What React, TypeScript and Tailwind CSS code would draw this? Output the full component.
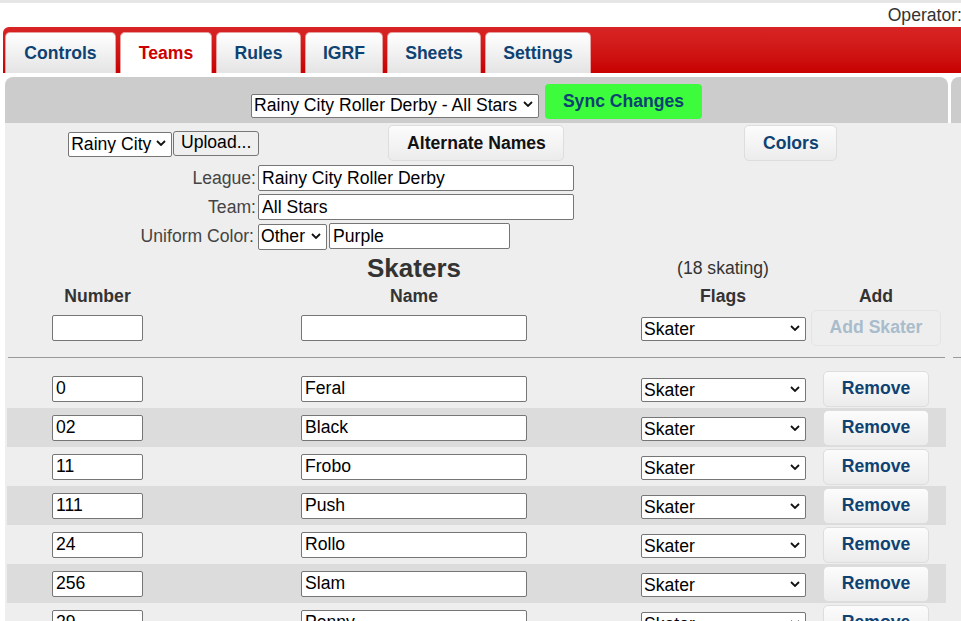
import React from "react";

const BLUE = "text-[#0e4272]";

function Chevron() {
  return (
    <svg
      className="absolute right-[6px] top-1/2 -translate-y-1/2 pointer-events-none"
      width="10"
      height="6"
      viewBox="0 0 10 6"
    >
      <path d="M1 1 L5 5 L9 1" fill="none" stroke="#111" strokeWidth="1.8" />
    </svg>
  );
}

function Select({ value, w, h }: { value: string; w: string; h: string }) {
  return (
    <div className={`relative flex-none ${w} ${h}`}>
      <select
        className={`appearance-none w-full h-full border border-[#767676] rounded-[2px] bg-white pl-[2px] pr-[18px] text-black leading-none outline-none`}
        defaultValue={value}
      >
        <option>{value}</option>
      </select>
      <Chevron />
    </div>
  );
}

function TextInput({ value, w, h = "h-[26px]" }: { value: string; w: string; h?: string }) {
  return (
    <input
      className={`flex-none ${w} ${h} border border-[#767676] rounded-[2px] bg-white px-[3px] text-black leading-none outline-none`}
      defaultValue={value}
      readOnly
    />
  );
}

const tabs = [
  { name: "Controls", w: "w-[111px]" },
  { name: "Teams", w: "w-[92px]", active: true },
  { name: "Rules", w: "w-[85px]" },
  { name: "IGRF", w: "w-[78px]" },
  { name: "Sheets", w: "w-[94px]" },
  { name: "Settings", w: "w-[106px]" },
];

const skaters = [
  ["0", "Feral"],
  ["02", "Black"],
  ["11", "Frobo"],
  ["111", "Push"],
  ["24", "Rollo"],
  ["256", "Slam"],
  ["29", "Penny"],
];

const COLS = "grid grid-cols-[181px_452px_166px_140px]";

export default function App() {
  return (
    <div className="w-[961px] h-[621px] overflow-hidden bg-white font-['Liberation_Sans',Arial,sans-serif] text-[17.6px] text-[#333]">
      <div className="h-[3px] bg-[#e6e6e6]" />
      <div className="h-[24px] flex justify-end items-center whitespace-nowrap text-[#333]">
        <span className="mr-[-1px]">Operator:</span>
      </div>
      {/* Tab bar */}
      <div className="ml-[3px] h-[46px] rounded-tl-[6px] bg-gradient-to-b from-[#d82424] to-[#c80000] flex items-end gap-[4px] pl-[2px]">
        {tabs.map((t) => (
          <div
            key={t.name}
            className={`${t.w} h-[41px] flex-none rounded-t-[5px] flex items-center justify-center font-bold border-t border-x border-[#e6a0a0] ${
              t.active
                ? "bg-white text-[#cc0000]"
                : `bg-gradient-to-b from-white to-[#e4e4e4] ${BLUE}`
            }`}
          >
            {t.name}
          </div>
        ))}
      </div>
      <div className="h-[4px]" />
      {/* Panels */}
      <div className="flex pl-[5px] h-[544px] overflow-hidden">
        <div className="w-[946px] flex-none flex flex-col">
          <div className="flex-none mr-[3px] h-[46px] bg-[#cccccc] rounded-t-[8px] flex items-start justify-center gap-[6px] pt-[7px]">
            <div className="mt-[8px]">
              <Select value="Rainy City Roller Derby - All Stars" w="w-[288px]" h="h-[24px]" />
            </div>
            <button className={`w-[157px] h-[35px] rounded-[4px] bg-[#3cfc3c] font-bold ${BLUE}`}>
              Sync Changes
            </button>
          </div>
          <div className="flex-none bg-[#eeeeee] pr-[3px]">
            {/* Top controls row */}
            <div className="grid grid-cols-3 pt-[2px] h-[38px] items-center">
              <div className="flex justify-center items-center gap-[1px] pl-[3px]">
                <Select value="Rainy City" w="w-[104px]" h="h-[25px]" />
                <button className="w-[86px] h-[25px] border border-[#767676] rounded-[3px] bg-[#efefef] text-black leading-none">
                  Upload...
                </button>
              </div>
              <div className="flex justify-center">
                <button className="w-[176px] h-[36px] rounded-[5px] border border-[#dddddd] bg-gradient-to-b from-[#fcfcfc] to-[#ececec] font-bold text-[#111]">
                  Alternate Names
                </button>
              </div>
              <div className="flex justify-center">
                <button className={`w-[93px] h-[36px] rounded-[5px] border border-[#dddddd] bg-gradient-to-b from-[#fcfcfc] to-[#ececec] font-bold ${BLUE}`}>
                  Colors
                </button>
              </div>
            </div>
            {/* Fields */}
            <div className="flex flex-col gap-[3px] mt-[4px]">
              <div className="flex items-center h-[26px]">
                <div className="w-[253px] text-right pr-[2px] text-[#444]">League:</div>
                <TextInput value="Rainy City Roller Derby" w="w-[316px]" />
              </div>
              <div className="flex items-center h-[26px]">
                <div className="w-[253px] text-right pr-[2px] text-[#444]">Team:</div>
                <TextInput value="All Stars" w="w-[316px]" />
              </div>
              <div className="flex items-center h-[26px] gap-[2px]">
                <div className="w-[251px] text-right pr-[2px] text-[#444]">Uniform Color:</div>
                <Select value="Other" w="w-[69px]" h="h-[26px]" />
                <TextInput value="Purple" w="w-[181px]" />
              </div>
            </div>
            {/* Skaters table */}
            <div className="ml-[2px] w-[939px] mt-[4px]">
              <div className={`${COLS} h-[30px] items-center`}>
                <div />
                <div className="text-center font-bold text-[26px] leading-[30px] text-[#333]">Skaters</div>
                <div className="text-center text-[#333]">(18 skating)</div>
                <div />
              </div>
              <div className={`${COLS} h-[25px] items-center font-bold text-[#333]`}>
                <div className="text-center">Number</div>
                <div className="text-center">Name</div>
                <div className="text-center">Flags</div>
                <div className="text-center">Add</div>
              </div>
              <div className={`${COLS} h-[39px] items-center`}>
                <div className="flex justify-center">
                  <TextInput value="" w="w-[91px]" />
                </div>
                <div className="flex justify-center">
                  <TextInput value="" w="w-[226px]" />
                </div>
                <div className="pl-[1px]">
                  <Select value="Skater" w="w-[165px]" h="h-[24px]" />
                </div>
                <div className="flex justify-center">
                  <button className="w-[130px] h-[36px] rounded-[5px] border border-[#e4e4e4] bg-[#eeeeee] font-bold text-[#a9bccb]">
                    Add Skater
                  </button>
                </div>
              </div>
              <div className="mt-[10px] mb-[11px] ml-[1px] w-[937px] h-[1px] bg-[#9a9a9a]" />
              {skaters.map(([num, name], i) => (
                <div
                  key={num}
                  className={`${COLS} h-[39px] items-center ${i % 2 === 1 ? "bg-[#dcdcdc]" : "bg-[#eeeeee]"}`}
                >
                  <div className="flex justify-center">
                    <TextInput value={num} w="w-[91px]" />
                  </div>
                  <div className="flex justify-center">
                    <TextInput value={name} w="w-[226px]" />
                  </div>
                  <div className="pl-[1px]">
                    <Select value="Skater" w="w-[165px]" h="h-[24px]" />
                  </div>
                  <div className="flex justify-center">
                    <button className={`w-[106px] h-[36px] rounded-[5px] border border-[#dddddd] bg-gradient-to-b from-[#fcfcfc] to-[#ececec] font-bold ${BLUE}`}>
                      Remove
                    </button>
                  </div>
                </div>
              ))}
            </div>
          </div>
        </div>
        <div className="flex-1 flex flex-col">
          <div className="flex-none h-[46px] bg-[#cccccc] rounded-tl-[8px]" />
          <div className="flex-1 bg-[#eeeeee] pt-[234px] pl-[2px]">
            <div className="h-[1px] bg-[#9a9a9a]" />
          </div>
        </div>
      </div>
    </div>
  );
}
